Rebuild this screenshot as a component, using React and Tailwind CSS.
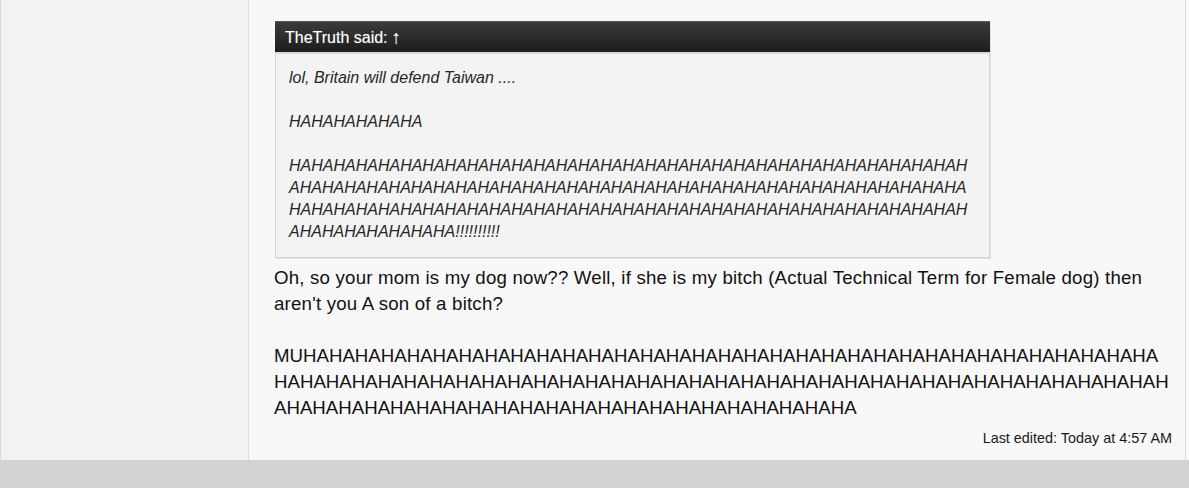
const QUOTE_LINES = [
  'HA'.repeat(30) + 'H',
  'A' + 'HA'.repeat(30),
  'HA'.repeat(30) + 'H',
  'A' + 'HA'.repeat(7) + '!!!!!!!!!!',
];

const LAUGH_LINES = ['MU' + 'HA'.repeat(33), 'HA'.repeat(34) + 'H', 'A' + 'HA'.repeat(22)];

function Quote() {
  return (
    <div className="ml-[1px] w-[715px] shadow-[1px_1px_0_#e2e2e2]">
      <div className="flex h-[31px] items-center gap-[4px] border-t border-[#5a5a5a] bg-linear-to-b from-[#3b3b3b] to-[#1d1d1d] pl-[10px] text-[16px] leading-[29px] text-white [text-shadow:0_0_1px_rgba(255,255,255,0.4)]">
        <span>TheTruth said:</span>
        <span className="text-[19px] leading-[29px]">↑</span>
      </div>
      <div className="border border-t-2 border-[#d5d5d5] border-t-[#d9d9d9] bg-[#f3f3f3] pb-[14px] pl-[13px] pt-[13px] text-[16px] italic leading-[22px] text-[#262626]">
        <p>lol, Britain will defend Taiwan ....</p>
        <p className="mt-[22px]">HAHAHAHAHAHA</p>
        <p className="mt-[22px] whitespace-nowrap">
          {QUOTE_LINES.map((line, i) => (
            <span key={i} className="block">
              {line}
            </span>
          ))}
        </p>
      </div>
    </div>
  );
}

export default function App() {
  return (
    <div className="h-[488px] w-[1189px] overflow-hidden bg-[#d3d3d3] font-['Liberation_Sans',Arial,sans-serif]">
      <div className="flex h-[460px] bg-[#fafafa]">
        <aside className="w-[249px] shrink-0 border-l border-r border-l-[#d9d9d9] border-r-[#dcdcdc] bg-[#f2f2f2]" />
        <main className="flex w-[937px] flex-col border-r border-[#dcdcdc] bg-[#f8f8f8] pl-[25px] pr-[13px] pt-[21px]">
          <Quote />
          <div className="mt-[7px] whitespace-nowrap text-[18.67px] leading-[26px] text-[#111]">
            <p className="tracking-[0.2px]">
              Oh, so your mom is my dog now?? Well, if she is my bitch (Actual Technical Term for Female dog) then
              <br />
              aren't you A son of a bitch?
            </p>
            <p className="mt-[26px]">
              {LAUGH_LINES.map((line, i) => (
                <span key={i} className="block">
                  {line}
                </span>
              ))}
            </p>
          </div>
          <div className="mt-[9px] text-right text-[14.4px] leading-[17px] text-[#1a1a1a]">
            Last edited: Today at 4:57 AM
          </div>
        </main>
      </div>
    </div>
  );
}
